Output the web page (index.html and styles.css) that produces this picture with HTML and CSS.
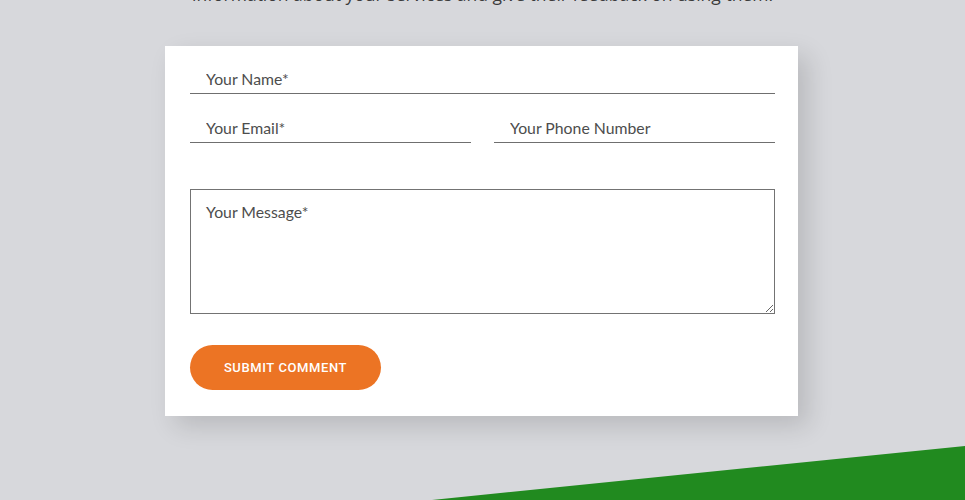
FILE: index.html
```html
<!DOCTYPE html>
<html lang="en">
<head>
<meta charset="utf-8">
<title>Comment form</title>
<link rel="stylesheet" href="styles.css">
</head>
<body>
<section class="page">
  <p class="intro">information about your services and give their feedback on using them.</p>
  <form class="card">
    <div class="row">
      <input class="field" type="text" placeholder="Your Name*">
    </div>
    <div class="row two">
      <input class="field" type="email" placeholder="Your Email*">
      <input class="field" type="tel" placeholder="Your Phone Number">
    </div>
    <textarea class="message" placeholder="Your Message*"></textarea>
    <button class="submit" type="button">SUBMIT COMMENT</button>
  </form>
</section>
<div class="wedge"></div>
</body>
</html>
```
FILE: styles.css
```css
html, body {
  margin: 0;
  padding: 0;
}
body {
  background: #d7d8dc;
  height: 500px;
  overflow: hidden;
  position: relative;
  font-family: "Lato", "Open Sans", sans-serif;
}
.page {
  display: flex;
  flex-direction: column;
}
.intro {
  margin: -18px 0 0;
  text-align: center;
  font-family: "Open Sans", sans-serif;
  font-size: 17.5px;
  line-height: 24px;
  color: #3c3c3c;
}
.card {
  position: relative;
  z-index: 1;
  width: 633px;
  box-sizing: border-box;
  margin: 40px 0 0 165px;
  padding: 18px 23px 26px 25px;
  background: #fff;
  box-shadow: 10px 10px 24px rgba(0, 0, 0, 0.14);
  display: flex;
  flex-direction: column;
}
.row {
  display: flex;
  gap: 23px;
}
.row.two {
  margin-top: 19px;
}
.field {
  flex: 1;
  min-width: 0;
  height: 30px;
  box-sizing: border-box;
  border: none;
  border-bottom: 1px solid #6f6f6f;
  padding: 0 16px;
  font-family: "Lato", sans-serif;
  font-size: 15.8px;
  color: #444;
  background: transparent;
  outline: none;
}
.field::placeholder,
.message::placeholder {
  color: #4d4d4d;
  opacity: 1;
}
.message {
  margin-top: 46px;
  height: 125px;
  box-sizing: border-box;
  border: 1px solid #737373;
  padding: 12px 15px;
  font-family: "Lato", sans-serif;
  font-size: 15.8px;
  line-height: 20px;
  color: #444;
  resize: vertical;
  outline: none;
}
.submit {
  align-self: flex-start;
  margin-top: 31px;
  width: 191px;
  height: 45px;
  border: none;
  border-radius: 23px;
  background: #ec7424;
  color: #fff;
  font-family: "Roboto", "Liberation Sans", sans-serif;
  font-weight: 500;
  font-size: 13px;
  letter-spacing: 0.6px;
  cursor: pointer;
}
.wedge {
  position: absolute;
  left: 0;
  right: 0;
  bottom: 0;
  height: 56px;
  background: #218a1f;
  clip-path: polygon(432px 100%, 100% 2px, 100% 100%);
}
```
